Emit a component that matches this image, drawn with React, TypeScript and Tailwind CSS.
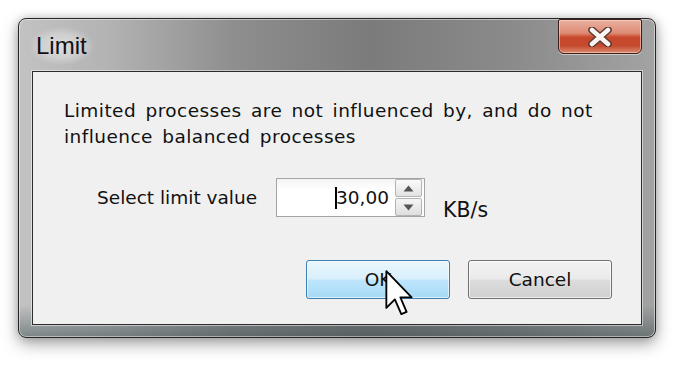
const bodyFont = "font-['DejaVu_Sans',sans-serif]";

function CloseButton() {
  return (
    <button
      aria-label="Close"
      className="flex items-center justify-center w-[84px] h-[35px] rounded-t-[2px] rounded-b-[6px] border border-[#3b1c16] bg-[linear-gradient(to_bottom,#eab2a2_0%,#dd8a74_40%,#c8482c_52%,#c54a2f_78%,#dc8c70_100%)] shadow-[inset_0_0_0_1px_rgba(255,220,210,0.55),0_1px_0_rgba(255,255,255,0.5)]"
    >
      <svg width="26" height="20" viewBox="0 0 26 20">
        <path d="M5 3 L21 17 M21 3 L5 17" stroke="#5b3a33" strokeWidth="7.5" strokeLinecap="round" />
        <path d="M5 3 L21 17 M21 3 L5 17" stroke="#fbf4f2" strokeWidth="4.5" strokeLinecap="round" />
      </svg>
    </button>
  );
}

function Spinner() {
  return (
    <div className="flex flex-col w-[27px] h-[37px] gap-[1px]">
      <div className="flex-1 flex items-center justify-center rounded-[2px] border border-[#b3b3b3] bg-[linear-gradient(to_bottom,#fbfbfb,#e2e2e2)]">
        <svg width="11" height="7" viewBox="0 0 11 7">
          <path d="M5.5 0.5 L10.5 6.5 L0.5 6.5 Z" fill="#555" />
        </svg>
      </div>
      <div className="flex-1 flex items-center justify-center rounded-[2px] border border-[#b3b3b3] bg-[linear-gradient(to_bottom,#f6f6f6,#dedede)]">
        <svg width="11" height="7" viewBox="0 0 11 7">
          <path d="M0.5 0.5 L10.5 0.5 L5.5 6.5 Z" fill="#555" />
        </svg>
      </div>
    </div>
  );
}

// mouse pointer hovering the OK button
function Cursor() {
  return (
    <svg
      className="absolute left-[78px] top-[9px] pointer-events-none"
      width="28"
      height="46"
      viewBox="0 0 12 20"
    >
      <path
        d="M0.5 0.5 L0.5 16.5 L4.2 12.8 L7 19.2 L9.3 18.2 L6.6 11.9 L11.5 11.9 Z"
        fill="#ffffff"
        stroke="#000000"
        strokeWidth="0.8"
        strokeLinejoin="round"
      />
    </svg>
  );
}

export default function App() {
  return (
    <div className="w-[684px] h-[368px] bg-white pl-[18px] pt-[18px] overflow-hidden">
      <div className="flex flex-col w-[638px] h-[320px] rounded-[8px] border border-[#262626] bg-[linear-gradient(to_bottom,rgba(0,0,0,0)_90%,rgba(40,62,64,0.45)_100%),linear-gradient(to_right,#c2c2c2_0%,#b3b3b3_14%,#8e8e8e_34%,#7b7b7b_55%,#8b8b8b_78%,#a3a3a3_100%)] shadow-[inset_0_0_0_1px_rgba(255,255,255,0.45),0_6px_16px_rgba(0,0,0,0.35),0_0_8px_rgba(0,0,0,0.18)]">
        <div className="flex items-start justify-between h-[52px] pl-[10px] pr-[13px]">
          <span className="mt-[8px] px-[7px] py-[5px] font-['Liberation_Sans',sans-serif] text-[24px] leading-[28px] text-[#111] bg-[radial-gradient(ellipse_at_center,rgba(230,230,230,0.8)_0%,rgba(230,230,230,0.45)_45%,rgba(230,230,230,0)_72%)]">
            Limit
          </span>
          <CloseButton />
        </div>

        <div
          className={`flex flex-col flex-1 mx-[13px] mb-[12px] border border-[#2c2c2c] bg-[#f0f0f0] shadow-[0_0_0_1px_rgba(255,255,255,0.5)] pl-[31px] pr-[29px] pt-[26px] text-[18.5px] text-[#111] ${bodyFont}`}
        >
          <p className="leading-[26px] tracking-[0.45px] [word-spacing:3px]">
            Limited processes are not influenced by, and do not
            <br />
            influence balanced processes
          </p>

          <div className="flex items-start mt-[28px] pl-[33px]">
            <span className="w-[179px] h-[39px] leading-[39px]">Select limit value</span>
            <div className="flex items-center justify-end w-[149px] h-[39px] border border-[#a4a4a4] bg-[linear-gradient(to_bottom,#f4f4f4,#ffffff_30%)] pr-[2px]">
              <span className="relative mr-[6px] leading-[24px]">
                <span className="absolute left-[-1px] top-[1px] w-[2px] h-[22px] bg-black" />
                30,00
              </span>
              <Spinner />
            </div>
            <span className="ml-[18px] pt-[20px] leading-[24px] text-[20.5px]">KB/s</span>
          </div>

          <div className="flex justify-end gap-[18px] mt-[38px]">
            <button className="relative w-[144px] h-[39px] rounded-[3px] border border-[#3c7fb1] bg-[linear-gradient(to_bottom,#eaf6fd_0%,#d9f0fc_48%,#bee6fd_52%,#a7d9f5_100%)] shadow-[inset_0_0_0_1px_rgba(255,255,255,0.6)] text-[#111]">
              OK
              <Cursor />
            </button>
            <button className="w-[144px] h-[39px] rounded-[3px] border border-[#707070] bg-[linear-gradient(to_bottom,#f2f2f2_0%,#ebebeb_48%,#dddddd_52%,#cfcfcf_100%)] shadow-[inset_0_0_0_1px_rgba(255,255,255,0.7)] text-[#111]">
              Cancel
            </button>
          </div>
        </div>
      </div>
    </div>
  );
}
